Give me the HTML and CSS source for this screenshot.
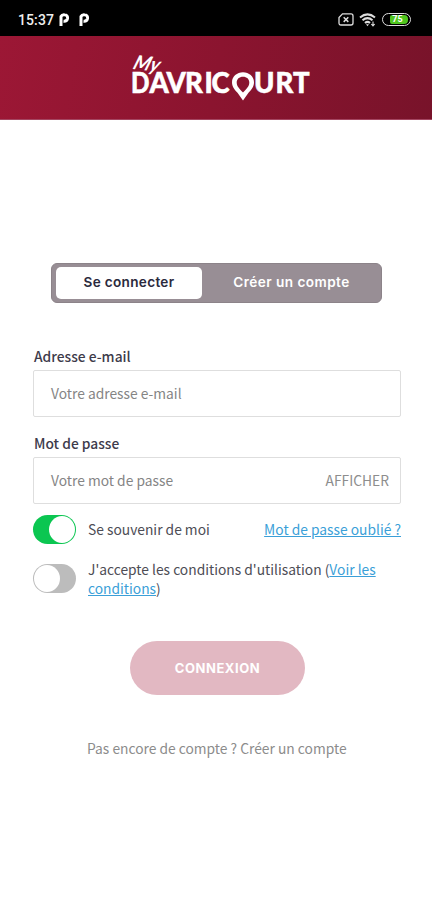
FILE: index.html
```html
<!DOCTYPE html>
<html lang="fr">
<head>
<meta charset="utf-8">
<meta name="viewport" content="width=device-width">
<title>My Davricourt</title>
<link rel="stylesheet" href="styles.css">
</head>
<body>
<div class="status">
  <span class="time">15:37</span>
  <svg class="app" width="12" height="14" viewBox="0 0 12 14"><path d="M3 13V3.500Q4 1.500 6.500 1.800Q10 2 9.500 5.500Q9 8.500 5.500 8.200" fill="none" stroke="#fff" stroke-width="3"/></svg>
  <svg class="app second" width="12" height="14" viewBox="0 0 12 14"><path d="M3 13V3.500Q4 1.500 6.500 1.800Q10 2 9.500 5.500Q9 8.500 5.500 8.200" fill="none" stroke="#fff" stroke-width="3"/></svg>
  <div class="icons">
    <svg width="16" height="13" viewBox="0 0 16 13" fill="none" stroke="#ddd" stroke-width="1.300"><path d="M4.500 .9H13Q15 .9 15 3V10Q15 12 13 12H3Q1 12 1 10V4.500Z"/><path d="M5.700 4.300l4.600 4.600M10.300 4.300L5.700 8.900" stroke-width="1.500"/></svg>
    <svg class="wifi" width="18" height="14" viewBox="0 0 18 14" fill="none" stroke="#ddd" stroke-width="2"><path d="M1 4.500Q8.500-1.800 16 4.500M3.500 7.300Q8.500 3 13.500 7.300M6 10Q8.500 7.800 11 10"/><path d="M7 11.200h3l-1.500 2z" fill="#ddd" stroke="none"/><path d="M14 8.500v4M12.300 11l1.700 2 1.700-2" stroke-width="1.100"/></svg>
    <div class="battery"><span>75</span></div>
  </div>
</div>
<header class="header">
  <svg class="logo" width="182" height="50" viewBox="0 0 182 50" fill="#fff">
    <text class="script" transform="translate(1 18) rotate(6) skewX(-14)" textLength="26" lengthAdjust="spacingAndGlyphs">My</text>
    <g class="word">
      <text x="0" y="42" textLength="18.500" lengthAdjust="spacingAndGlyphs">D</text>
      <text y="42" x="18.500 35.500 54 73.500 80.500">AVRIC</text>
      <text y="42" x="123 144.500 162">URT</text>
    </g>
    <path fill-rule="evenodd" d="M112 21.300C118 21.300 123 25.500 123 31.200C123 36 120 39 117.500 41.800L112 49.500L106.500 41.800C104 39 101 36 101 31.200C101 25.500 106 21.300 112 21.300ZM112 25.700C108.200 25.700 105.700 28 105.700 31.600C105.700 35.500 108.500 38 112 41.500C115.500 38 118.300 35.500 118.300 31.600C118.300 28 115.800 25.700 112 25.700Z"/>
  </svg>
</header>
<main class="main">
  <div class="tabs">
    <div class="tab active"><span class="t1">Se connecter</span></div>
    <div class="tab"><span class="t2">Créer un compte</span></div>
  </div>
  <form class="form">
    <label class="label l1">Adresse e-mail</label>
    <div class="field"><span class="p1">Votre adresse e-mail</span></div>
    <label class="label l2">Mot de passe</label>
    <div class="field"><span class="p2">Votre mot de passe</span><span class="show">AFFICHER</span></div>
    <div class="row remember">
      <div class="toggle on"></div>
      <span class="r1">Se souvenir de moi</span>
      <a class="link forgot">Mot de passe oublié ?</a>
    </div>
    <div class="row terms">
      <div class="toggle"></div>
      <div class="lines">J'accepte les conditions d'utilisation (<a class="link">Voir les</a><br><a class="link">conditions</a>)</div>
    </div>
    <div class="submit"><span>CONNEXION</span></div>
  </form>
  <p class="signup">Pas encore de compte ? Créer un compte</p>
</main>
</body>
</html>
```
FILE: styles.css
```css
* { box-sizing: border-box; }
body {
  margin: 0;
  width: 432px;
  height: 900px;
  overflow: hidden;
  background: #fff;
  color: #4d4d55;
  font: 13.8px/19px "Noto Sans CJK SC", "Noto Sans", sans-serif;
}
.status {
  height: 36px;
  padding: 3px 21px 0 18px;
  background: #000;
  color: #eee;
  display: flex;
  align-items: center;
}
.time { width: 40px; font: 500 14px/18px Roboto, sans-serif; letter-spacing: .1px; }
.app.second { margin-left: 8px; }
.icons { margin-left: auto; display: flex; align-items: center; gap: 5px; }
.battery {
  width: 29px;
  height: 13px;
  padding: 1px 2px;
  border: 1.5px solid #ddd;
  border-radius: 7px;
  display: flex;
  justify-content: flex-end;
}
.battery span {
  width: 18px;
  height: 9px;
  border-radius: 2px 4px 4px 2px;
  background: #4fc51e;
  color: #fff;
  padding-right: 3px;
  text-align: center;
  font: 700 9px/9px Roboto, sans-serif;
}
.header {
  height: 84px;
  padding: 15px 0 0 131px;
  background: linear-gradient(100deg, #9c1735 0%, #8b142f 50%, #78132a 100%);
  border-bottom: 1px solid #a44560;
}
.logo { display: block; overflow: visible; }
.word { font: 900 27.5px Lato, sans-serif; stroke: #fff; stroke-width: .5px; }
.script { font: italic 700 20px Lato, sans-serif; }
.main { padding: 143px 31px 0 33px; }
.tabs {
  width: 331px;
  height: 40px;
  margin-left: 18px;
  padding: 3px 4px;
  border-radius: 6px;
  border: 1px solid #8c8389;
  background: #988e95;
  display: flex;
  color: #fff;
  font: 600 13.6px/17px Inter, sans-serif;
}
.tab { flex: 1; display: flex; align-items: center; justify-content: center; white-space: nowrap; padding: 0 0 1px 4px; }
.tab.active { flex: 0 0 146px; border-radius: 5px; background: #fff; color: #2b2a3d; padding-left: 0; }
.t1 { letter-spacing: .3px; }
.t2 { letter-spacing: .45px; }
.form { margin-top: 44px; }
.label { display: block; height: 23px; color: #3d3b4b; font-weight: 500; }
.field {
  width: 368px;
  height: 47px;
  padding: 0 11px 0 17px;
  border: 1px solid #dedede;
  border-radius: 2px;
  display: flex;
  align-items: center;
  justify-content: space-between;
  color: #858585;
  white-space: nowrap;
}
.l1, .l2 { padding-left: 1px; }
.l2 { margin-top: 17px; }
.show { color: #8d8d8d; }
.row { display: flex; }
.remember { margin-top: 11px; align-items: center; height: 29px; }
.toggle {
  flex: none;
  width: 43px;
  height: 29px;
  margin-right: 12px;
  padding: 1px;
  border-radius: 15px;
  background: #bcbcbc;
  display: flex;
}
.toggle::before { content: ""; width: 26px; height: 27px; border-radius: 50%; background: #fff; }
.toggle.on { background: #0bc651; justify-content: flex-end; }
.link { color: #3b9fd8; text-decoration: underline; }
.forgot { margin-left: auto; }
.terms { margin-top: 16px; height: 47px; white-space: nowrap; }
.terms .toggle { margin-top: 4px; }
.submit {
  width: 175px;
  height: 54px;
  margin: 34px 0 0 97px;
  border-radius: 27px;
  background: #e2b8c2;
  color: #fff;
  display: flex;
  align-items: center;
  justify-content: center;
  font: 700 13px/17px Inter, sans-serif;
  letter-spacing: .55px;
}
.signup { margin: 44px 0 0 54px; color: #8c8c8c; white-space: nowrap; }
```
